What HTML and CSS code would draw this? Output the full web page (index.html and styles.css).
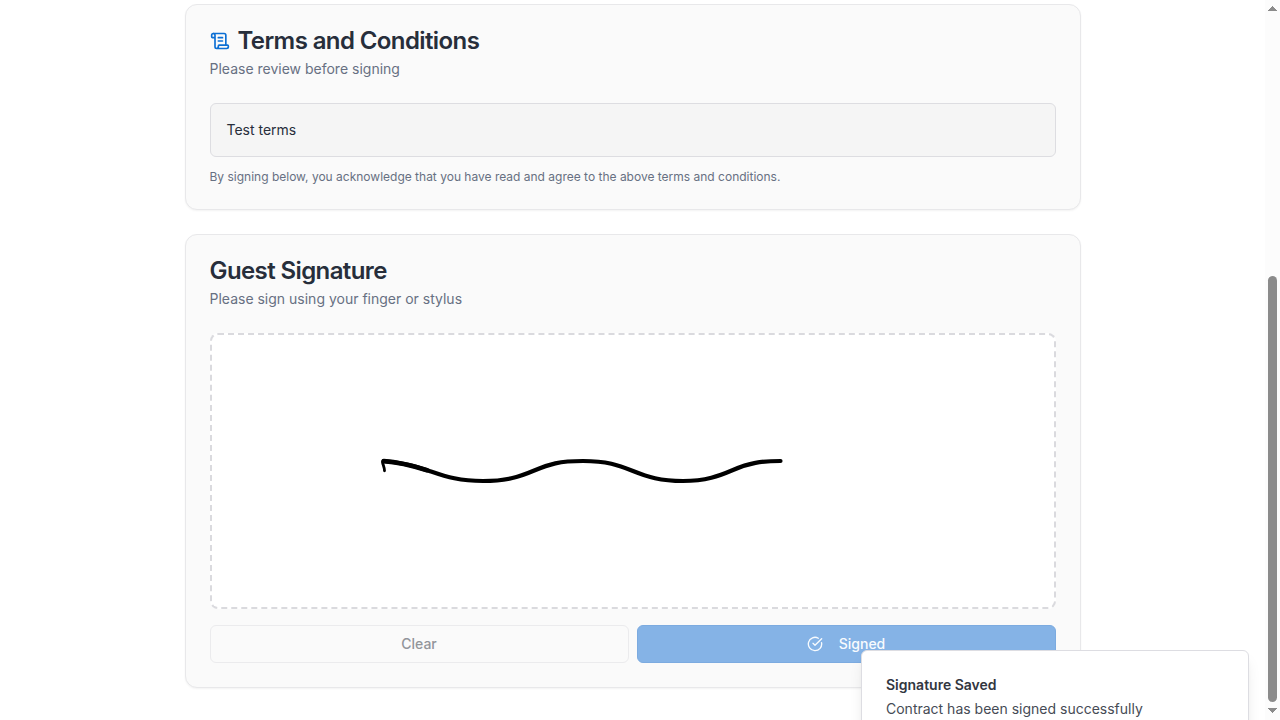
FILE: index.html
```html
<!DOCTYPE html>
<html lang="en">
<head>
<meta charset="utf-8">
<title>Contract</title>
<link rel="stylesheet" href="styles.css">
</head>
<body>
<div class="app">
  <main class="page">
    <div class="content">
      <section class="card">
        <header class="card-header">
          <h2 class="card-title">
            <svg class="title-icon" viewBox="0 0 24 24" fill="none" stroke="currentColor" stroke-width="2" stroke-linecap="round" stroke-linejoin="round"><path d="M15 12h-5"/><path d="M15 8h-5"/><path d="M19 17V5a2 2 0 0 0-2-2H4"/><path d="M8 21h12a2 2 0 0 0 2-2v-1a1 1 0 0 0-1-1H11a1 1 0 0 0-1 1v1a2 2 0 1 1-4 0V5a2 2 0 1 0-4 0v2a1 1 0 0 0 1 1h3"/></svg>
            <span>Terms and Conditions</span>
          </h2>
          <p class="card-description">Please review before signing</p>
        </header>
        <div class="terms">Test terms</div>
        <p class="terms-note">By signing below, you acknowledge that you have read and agree to the above terms and conditions.</p>
      </section>
      <section class="card">
        <header class="card-header">
          <h2 class="card-title">Guest Signature</h2>
          <p class="card-description">Please sign using your finger or stylus</p>
        </header>
        <div class="signature-pad">
          <svg class="signature" viewBox="0 0 842 272" fill="none" stroke="#000" stroke-linecap="round" stroke-linejoin="round">
            <path stroke-width="4.2" d="M171.5 126C192 127.500 205 132 219 136.500C235 142 248 146 271 146C294 146 307 142 321 136C338 129 347 126 371 126C395 126 406 130 421 136C436 142 448 146 471 146C494 146 507 141 521 135C537 128 549 126 568.500 126"/>
            <path stroke-width="4.7" d="M171.800 126.200C190 127.500 203 131.500 215 135.200"/>
            <path stroke-width="2.8" d="M170.500 127C170.800 130 172.500 132 172.500 135.800"/>
          </svg>
        </div>
        <div class="actions">
          <button class="button button-outline" disabled>Clear</button>
          <button class="button button-primary" disabled>
            <svg class="button-icon" viewBox="0 0 24 24" fill="none" stroke="currentColor" stroke-width="2" stroke-linecap="round" stroke-linejoin="round"><path d="M21.801 10A10 10 0 1 1 17 3.335"/><path d="m9 11 3 3L22 4"/></svg>
            <span>Signed</span>
          </button>
        </div>
      </section>
    </div>
  </main>
  <div class="scrollbar">
    <svg class="scroll-arrow" viewBox="0 0 15 15" shape-rendering="crispEdges"><path fill="#8b8b8b" d="M7 6h1v1h1v1h1v1h1v1h1v1H3v-1h1V9h1V8h1V7h1z"/></svg>
    <div class="scroll-thumb"></div>
    <svg class="scroll-arrow" viewBox="0 0 15 15" shape-rendering="crispEdges"><path fill="#8b8b8b" d="M3 3h9v1h-1v1h-1v1H9v1H8v1H7V7H6V6H5V5H4V4H3z"/></svg>
  </div>
</div>
<div class="toast" role="status">
  <div class="toast-title">Signature Saved</div>
  <div class="toast-description">Contract has been signed successfully</div>
</div>
</body>
</html>
```
FILE: styles.css
```css
* {
  box-sizing: border-box;
}

body {
  margin: 0;
  overflow: hidden;
  background: #fff;
  color: #272e3b;
  font-family: Inter, "Liberation Sans", sans-serif;
  font-size: 14px;
  line-height: 20px;
}

h2,
p {
  margin: 0;
}

.app {
  display: flex;
  height: 720px;
}

.page {
  flex: 1;
  padding-top: 4px;
}

.content {
  display: flex;
  flex-direction: column;
  gap: 24px;
  width: 896px;
  margin: 0 auto;
}

.card {
  padding: 24px;
  border: 1px solid #e8e8ea;
  border-radius: 12px;
  background: #fafafa;
  box-shadow: 0 1px 2px rgba(0, 0, 0, 0.05);
}

.card-header {
  display: flex;
  flex-direction: column;
  gap: 6px;
  margin-bottom: 24px;
}

.card-title {
  display: flex;
  align-items: center;
  gap: 8px;
  font-size: 24px;
  font-weight: 600;
  line-height: 24px;
  letter-spacing: -0.6px;
}

.title-icon {
  width: 20px;
  height: 20px;
  color: #0c6fd4;
}

.card-description {
  color: #677082;
}

.terms {
  padding: 16px;
  border: 1px solid #dddde1;
  border-radius: 6px;
  background: #f5f5f5;
}

.terms-note {
  margin-top: 12px;
  color: #677082;
  font-size: 12px;
  line-height: 16px;
}

.signature-pad {
  height: 276px;
  border: 2px dashed #dadade;
  border-radius: 8px;
  background: #fff;
}

.signature {
  display: block;
  width: 842px;
  height: 272px;
}

.actions {
  display: flex;
  gap: 8px;
  margin-top: 16px;
}

.button {
  display: flex;
  flex: 1;
  align-items: center;
  justify-content: center;
  gap: 16px;
  height: 38px;
  padding: 0 16px;
  border: 1px solid;
  border-radius: 6px;
  font: 500 14px/20px Inter, "Liberation Sans", sans-serif;
}

.button-outline {
  border-color: #ebebed;
  background: #fafafa;
  color: #92959a;
}

.button-primary {
  border-color: #7cabe0;
  background: #85b3e6;
  color: #f8fbfe;
}

.button-icon {
  width: 16px;
  height: 16px;
}

.scrollbar {
  display: flex;
  flex-direction: column;
  align-items: center;
  width: 15px;
  background: #fcfcfc;
}

.scroll-arrow {
  width: 15px;
  height: 15px;
}

.scroll-thumb {
  width: 9px;
  height: 426px;
  margin-top: auto;
  margin-bottom: 3px;
  border-radius: 5px;
  background: #8b8b8b;
}

.toast {
  position: absolute;
  top: 650px;
  right: 31px;
  display: flex;
  flex-direction: column;
  gap: 4px;
  width: 388px;
  height: 94px;
  padding: 24px;
  border: 1px solid #dddde2;
  border-radius: 6px;
  background: #fff;
  color: #32363f;
  box-shadow: 0 10px 15px -3px rgba(0, 0, 0, 0.1), 0 4px 6px -4px rgba(0, 0, 0, 0.1);
}

.toast-title {
  font-weight: 600;
}

.toast-description {
  color: #464b55;
}
```
